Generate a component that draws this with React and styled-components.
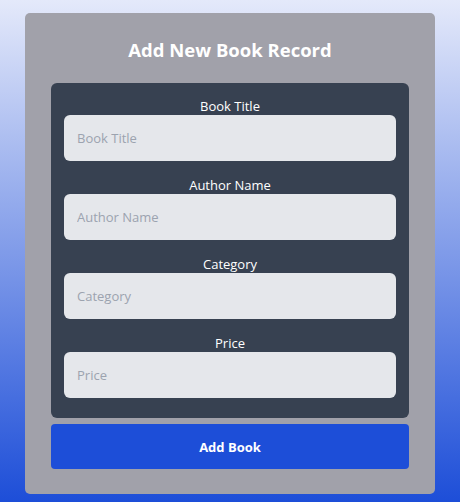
import styled, { createGlobalStyle } from "styled-components";

const GlobalStyle = createGlobalStyle`
  html, body {
    margin: 0;
    padding: 0;
  }
  body {
    font-family: "Open Sans", "Noto Sans", sans-serif;
    min-height: 100vh;
    background: linear-gradient(to bottom, #e4e9fa, #1d4ed8);
  }
`;

const fields = ["Book Title", "Author Name", "Category", "Price"];

export default function App() {
  return (
    <>
      <GlobalStyle />
      <StyledPage>
        <StyledCard>
          <StyledTitle>Add New Book Record</StyledTitle>
          <StyledPanel>
            {fields.map((field) => (
              <StyledField key={field}>
                <StyledLabel>{field}</StyledLabel>
                <StyledInput placeholder={field} />
              </StyledField>
            ))}
          </StyledPanel>
          <StyledButton type="button">Add Book</StyledButton>
        </StyledCard>
      </StyledPage>
    </>
  );
}

const StyledPage = styled.div`
  display: flex;
  justify-content: center;
  padding-top: 13px;
`;

const StyledCard = styled.div`
  width: 410px;
  box-sizing: border-box;
  background-color: #a1a1aa;
  border-radius: 5px;
  padding: 24px 26px 25px;
  display: flex;
  flex-direction: column;
`;

const StyledTitle = styled.h1`
  margin: 0 0 20px;
  text-align: center;
  color: #fff;
  font-size: 18.5px;
  line-height: 26px;
  font-weight: 700;
`;

const StyledPanel = styled.div`
  background-color: #374151;
  border-radius: 6px;
  padding: 15px 13px 20px;
  display: flex;
  flex-direction: column;
  gap: 16px;
`;

const StyledField = styled.div`
  display: flex;
  flex-direction: column;
`;

const StyledLabel = styled.label`
  text-align: center;
  color: #fff;
  font-size: 13px;
  line-height: 17px;
`;

const StyledInput = styled.input`
  height: 46px;
  box-sizing: border-box;
  border: none;
  border-radius: 6px;
  background-color: #e5e7eb;
  padding: 0 13px;
  font-family: inherit;
  font-size: 13px;
  color: #374151;
  outline: none;

  &::placeholder {
    color: #9ca3af;
  }
`;

const StyledButton = styled.button`
  margin-top: 6px;
  height: 45px;
  border: none;
  border-radius: 4px;
  background-color: #1d4ed8;
  color: #fff;
  font-family: inherit;
  font-size: 13px;
  font-weight: 700;
`;
